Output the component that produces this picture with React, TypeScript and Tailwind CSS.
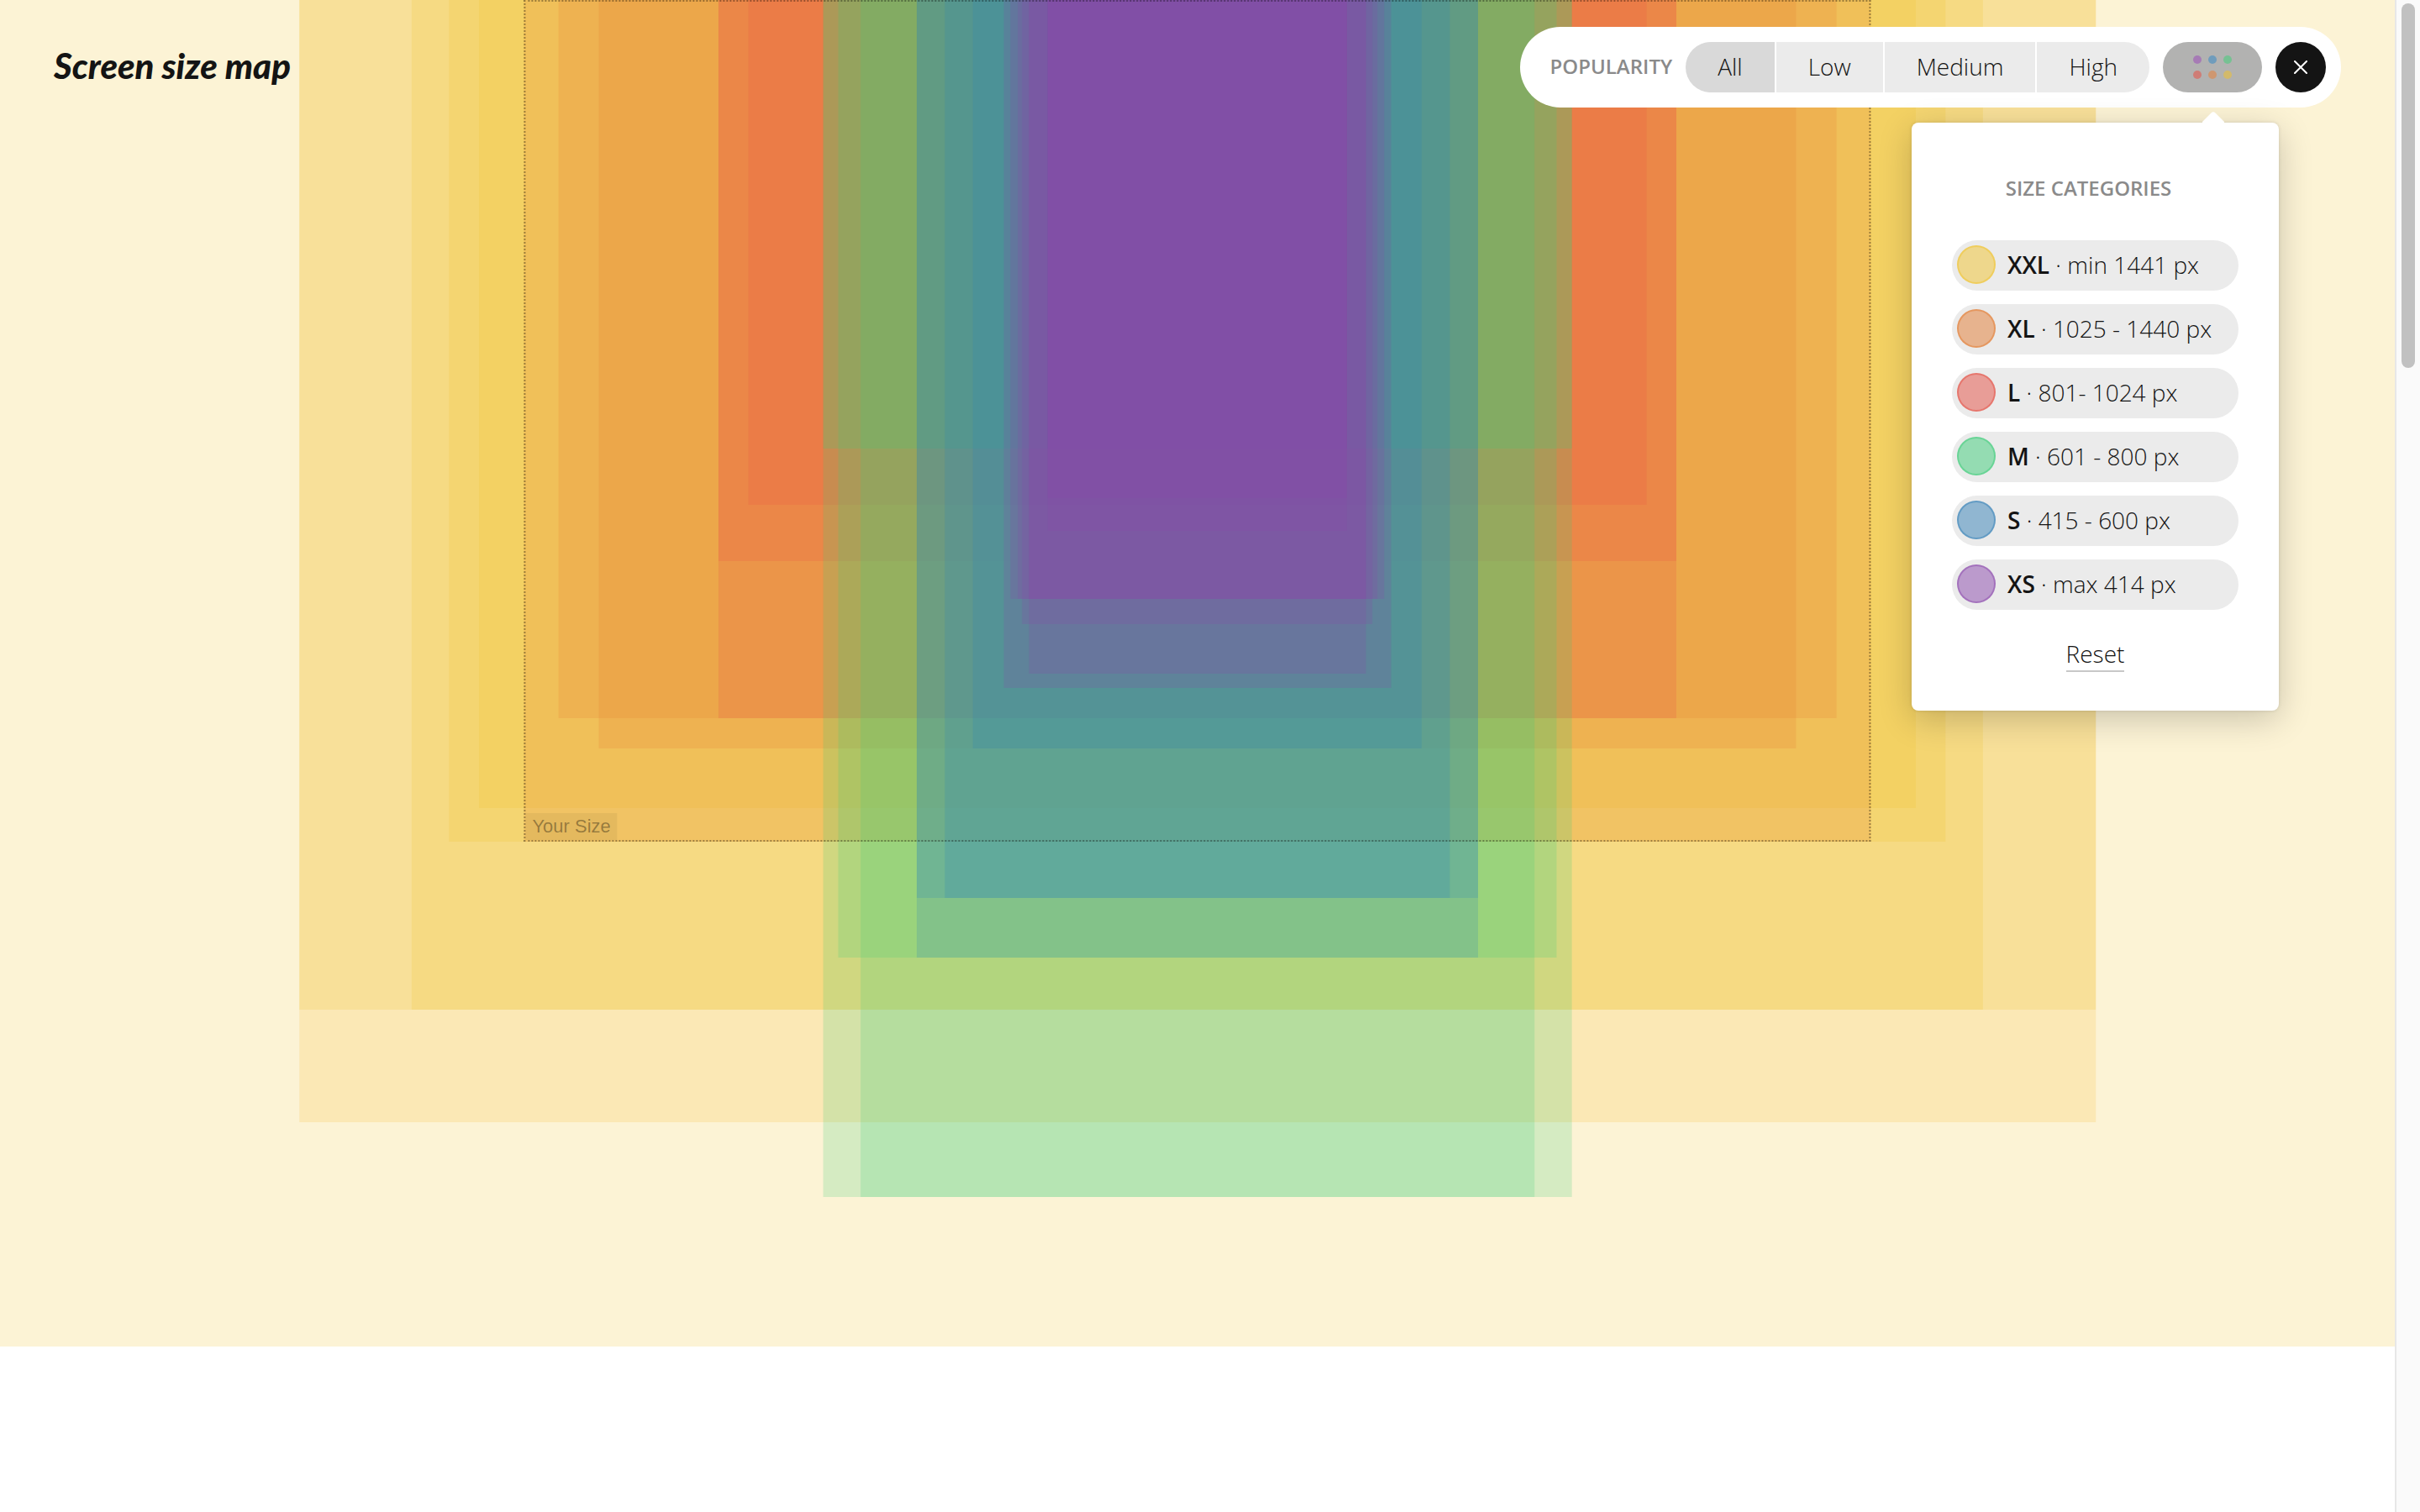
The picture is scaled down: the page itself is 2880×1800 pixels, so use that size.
import { useState } from "react";

const MAP_WIDTH = 2560;
const MAP_HEIGHT = 1440;

type Screen = { w: number; h: number; tone: string };

const yellow = "bg-[#f1c42d]/20";
const amber = "bg-[#fbbe35]/20";
const orange = "bg-[#e87c34]/20";
const red = "bg-[#ea4f48]/20";
const green = "bg-[#3acd78]/20";
const blue = "bg-[#2a82be]/20";
const purple = "bg-[#8e48ab]/20";

const screens: Screen[] = [
  { w: 2560, h: 1440, tone: yellow },
  { w: 1920, h: 1200, tone: amber },
  { w: 1920, h: 1080, tone: yellow },
  { w: 1680, h: 1080, tone: yellow },
  { w: 1600, h: 900, tone: yellow },
  { w: 1536, h: 864, tone: yellow },
  { w: 1440, h: 900, tone: orange },
  { w: 1366, h: 768, tone: orange },
  { w: 1280, h: 800, tone: orange },
  { w: 1024, h: 768, tone: red },
  { w: 1024, h: 600, tone: red },
  { w: 960, h: 540, tone: red },
  { w: 800, h: 1280, tone: green },
  { w: 800, h: 480, tone: green },
  { w: 768, h: 1024, tone: green },
  { w: 720, h: 1280, tone: green },
  { w: 600, h: 1024, tone: blue },
  { w: 600, h: 960, tone: blue },
  { w: 540, h: 960, tone: blue },
  { w: 480, h: 800, tone: blue },
  { w: 414, h: 736, tone: purple },
  { w: 400, h: 640, tone: purple },
  { w: 384, h: 640, tone: purple },
  { w: 375, h: 667, tone: purple },
  { w: 360, h: 720, tone: purple },
  { w: 360, h: 640, tone: purple },
  { w: 320, h: 568, tone: purple },
  { w: 320, h: 533, tone: purple },
  { w: 320, h: 480, tone: purple },
];

const categories = [
  { name: "XXL", range: "min 1441 px", dot: "bg-[#f1c42d]/50 border-[#f1c42d]/50" },
  { name: "XL", range: "1025 - 1440 px", dot: "bg-[#e37b31]/50 border-[#e37b31]/50" },
  { name: "L", range: "801- 1024 px", dot: "bg-[#e54f43]/50 border-[#e54f43]/50" },
  { name: "M", range: "601 - 800 px", dot: "bg-[#3dcd79]/50 border-[#3dcd79]/50" },
  { name: "S", range: "415 - 600 px", dot: "bg-[#3581b7]/50 border-[#3581b7]/50" },
  { name: "XS", range: "max 414 px", dot: "bg-[#8b49ad]/50 border-[#8b49ad]/50" },
];

const gridDots = [
  "bg-[#a67bb5]",
  "bg-[#6f9cbc]",
  "bg-[#76c193]",
  "bg-[#cf7d76]",
  "bg-[#cf9770]",
  "bg-[#d3ba6b]",
];

function ScreenMap() {
  return (
    <section aria-label="Screen sizes" className="relative aspect-[16/9] w-full overflow-hidden">
      {screens.map((s) => (
        <div
          key={`${s.w}x${s.h}`}
          className={`absolute top-0 left-1/2 -translate-x-1/2 ${s.tone}`}
          style={{ width: `${(s.w / MAP_WIDTH) * 100}%`, height: `${(s.h / MAP_HEIGHT) * 100}%` }}
        />
      ))}
      <div className="absolute top-0 left-1/2 flex h-[62.5%] w-[56.25%] -translate-x-1/2 items-end border-2 border-dotted border-black/35">
        <span className="bg-black/5 px-2 py-1 font-['Liberation_Sans',sans-serif] text-[22px] leading-6 text-black/35">
          Your Size
        </span>
      </div>
    </section>
  );
}

function Toolbar() {
  const [popularity, setPopularity] = useState("All");
  const base = "h-full border-r-2 border-white px-[38px] pb-0.5 font-light last:border-r-0";
  return (
    <div className="flex h-24 items-center gap-4 rounded-full bg-white pr-[18px] pl-9">
      <span id="popularity" className="pb-0.5 text-[24px] font-semibold text-[#8a8a8a]">
        POPULARITY
      </span>
      <div role="group" aria-labelledby="popularity" className="flex h-15 overflow-hidden rounded-full text-[28px]">
        {["All", "Low", "Medium", "High"].map((p) => (
          <button
            key={p}
            type="button"
            aria-pressed={p === popularity}
            onClick={() => setPopularity(p)}
            className={`${base} ${p === popularity ? "bg-[#d9d9d9]" : "bg-[#ebebeb]"}`}
          >
            {p}
          </button>
        ))}
      </div>
      <button
        type="button"
        aria-label="Size categories"
        className="grid h-15 w-[118px] grid-cols-3 place-content-center justify-center gap-2 rounded-full bg-[#b2b2b1] px-9"
      >
        {gridDots.map((c) => (
          <span key={c} className={`size-[10px] rounded-full ${c}`} />
        ))}
      </button>
      <button
        type="button"
        aria-label="Close"
        className="flex size-15 items-center justify-center rounded-full bg-[#141414]"
      >
        <svg viewBox="0 0 16 16" className="size-4" fill="none" stroke="#fff" strokeWidth="2" strokeLinecap="round">
          <path d="M1 1l14 14M15 1L1 15" />
        </svg>
      </button>
    </div>
  );
}

function CategoryPanel() {
  return (
    <div className="absolute top-[114px] right-[74px] flex w-[437px] flex-col items-center rounded-lg bg-white px-12 pt-[62px] pb-[46px] shadow-[0_10px_40px_rgba(0,0,0,0.2),0_0_4px_rgba(0,0,0,0.12)]">
      <svg viewBox="0 0 26 14" className="absolute -top-[13px] right-[65px] h-[14px] w-[26px]" fill="#fff">
        <path d="M0 14V12L10.500 1.500Q13 -1 15.500 1.500L26 12V14Z" />
      </svg>
      <h2 className="pr-4 text-[24px] leading-8 font-semibold text-[#8a8a8a]">SIZE CATEGORIES</h2>
      <ul className="mt-[46px] flex w-full flex-col gap-4">
        {categories.map((c) => (
          <li key={c.name}>
            <button
              type="button"
              className="flex h-15 w-full items-center gap-[14px] rounded-full bg-[#ebebeb] pb-0.5 pl-[6px] text-[28px] font-light whitespace-nowrap"
            >
              <span className={`size-[46px] rounded-full border-2 ${c.dot}`} />
              <span>
                <strong className="font-semibold">{c.name}</strong> · {c.range}
              </span>
            </button>
          </li>
        ))}
      </ul>
      <button type="button" className="mt-8 border-b-2 border-[#c8c8c8] text-[28px] leading-10 font-light">
        Reset
      </button>
    </div>
  );
}

export default function App() {
  return (
    <div className="flex h-screen overflow-hidden bg-white font-['Open_Sans',sans-serif] text-[#141414]">
      <main className="relative min-w-0 flex-1">
        <ScreenMap />
        <header className="absolute inset-x-0 top-0 flex items-start justify-between pt-8 pr-16 pl-16">
          <h1 className="font-['Lato',sans-serif] text-[42px] leading-[92px] font-black italic">Screen size map</h1>
          <div className="relative">
            <Toolbar />
            <CategoryPanel />
          </div>
        </header>
      </main>
      <div className="flex w-[30px] justify-center border-l-2 border-[#e7e7e7] bg-[#fafafa] py-1">
        <div className="h-[434px] w-4 rounded-full bg-[#c1c1c1]" />
      </div>
    </div>
  );
}
